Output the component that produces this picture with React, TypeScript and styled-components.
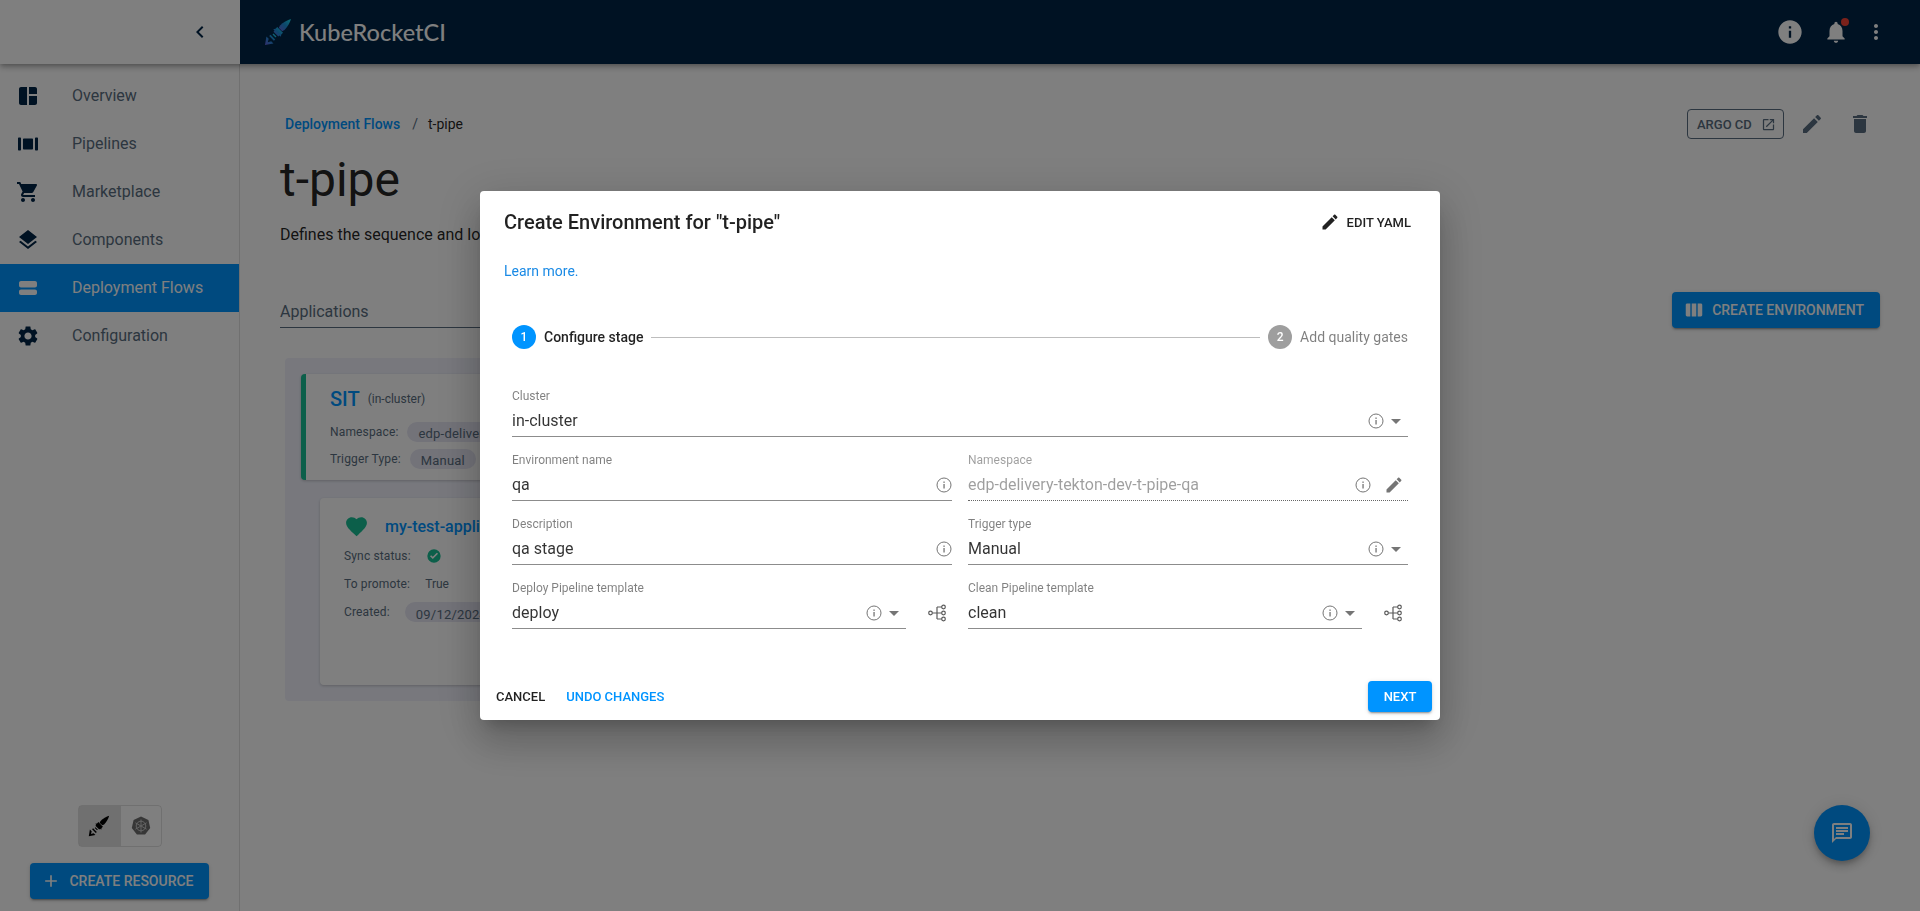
import React from "react";
import styled, { createGlobalStyle } from "styled-components";

const PATHS = {
  dashboard:
    "M11 21H5c-1.1 0-2-.9-2-2V5c0-1.1.9-2 2-2h6v18zm2 0h6c1.1 0 2-.9 2-2v-7h-8v9zm8-11V5c0-1.1-.9-2-2-2h-6v7h8z",
  pipelines:
    "M2 6.5c0-.6.4-1 1-1h1c.6 0 1 .4 1 1v11c0 .6-.4 1-1 1H3c-.6 0-1-.4-1-1v-11zm17 0c0-.6.4-1 1-1h1c.6 0 1 .4 1 1v11c0 .6-.4 1-1 1h-1c-.6 0-1-.4-1-1v-11zM7 7.5c0-.6.4-1 1-1h8c.6 0 1 .4 1 1v9c0 .6-.4 1-1 1H8c-.6 0-1-.4-1-1v-9z",
  cart: "M7 18c-1.1 0-1.99.9-1.99 2S5.9 22 7 22s2-.9 2-2-.9-2-2-2zM1 2v2h2l3.6 7.59-1.35 2.45c-.16.28-.25.61-.25.96 0 1.1.9 2 2 2h12v-2H7.42c-.14 0-.25-.11-.25-.25l.03-.12.9-1.63h7.45c.75 0 1.41-.41 1.75-1.03l3.58-6.49c.08-.14.12-.31.12-.48 0-.55-.45-1-1-1H5.21l-.94-2H1zm16 16c-1.1 0-1.99.9-1.99 2s.89 2 1.99 2 2-.9 2-2-.9-2-2-2z",
  layers:
    "M11.99 18.54l-7.37-5.73L3 14.07l9 7 9-7-1.63-1.27-7.38 5.74zM12 16l7.36-5.73L21 9l-9-7-9 7 1.63 1.27L12 16z",
  flows:
    "M5 5h14c1.1 0 2 .9 2 2v2.5c0 1.1-.9 2-2 2H5c-1.1 0-2-.9-2-2V7c0-1.100.9-2 2-2zm0 8.500h14c1.100 0 2 .9 2 2V17c0 1.100-.9 2-2 2H5c-1.100 0-2-.9-2-2v-1.500c0-1.100.9-2 2-2z",
  settings:
    "M19.14 12.94c.04-.3.06-.61.06-.94 0-.32-.02-.64-.07-.94l2.03-1.58c.18-.14.23-.41.12-.61l-1.92-3.32c-.12-.22-.37-.29-.59-.22l-2.39.96c-.5-.38-1.03-.7-1.62-.94l-.36-2.54c-.04-.24-.24-.41-.48-.41h-3.84c-.24 0-.43.17-.47.41l-.36 2.54c-.59.24-1.13.57-1.62.94l-2.39-.96c-.22-.08-.47 0-.59.22L2.74 8.87c-.12.21-.08.47.12.61l2.03 1.58c-.05.3-.09.63-.09.94s.02.64.07.94l-2.03 1.58c-.18.14-.23.41-.12.61l1.92 3.32c.12.22.37.29.59.22l2.39-.96c.5.38 1.03.7 1.62.94l.36 2.54c.05.24.24.41.48.41h3.84c.24 0 .44-.17.47-.41l.36-2.54c.59-.24 1.13-.56 1.62-.94l2.39.96c.22.08.47 0 .59-.22l1.92-3.32c.12-.22.07-.47-.12-.61l-2.01-1.58zM12 15.6c-1.98 0-3.6-1.62-3.6-3.6s1.62-3.6 3.6-3.6 3.6 1.62 3.6 3.6-1.62 3.6-3.6 3.6z",
  pencil:
    "M3 17.25V21h3.750L17.810 9.940l-3.750-3.750L3 17.250zM20.710 7.040c.390-.390.390-1.020 0-1.410l-2.340-2.340c-.390-.390-1.020-.390-1.410 0l-1.830 1.830 3.750 3.750 1.830-1.830z",
  trash:
    "M6 19c0 1.100.9 2 2 2h8c1.100 0 2-.9 2-2V7H6v12zM19 4h-3.500l-1-1h-5l-1 1H5v2h14V4z",
  external:
    "M19 19H5V5h7V3H5c-1.110 0-2 .9-2 2v14c0 1.100.89 2 2 2h14c1.100 0 2-.9 2-2v-7h-2v7zM14 3v2h3.590l-9.830 9.830 1.410 1.410L19 6.410V10h2V3h-7z",
  info: "M12 2C6.480 2 2 6.480 2 12s4.480 10 10 10 10-4.480 10-10S17.520 2 12 2zm1 15h-2v-6h2v6zm0-8h-2V7h2v2z",
  bell: "M12 22c1.100 0 2-.9 2-2h-4c0 1.100.89 2 2 2zm6-6v-5c0-3.070-1.640-5.640-4.500-6.320V4c0-.83-.67-1.500-1.500-1.500s-1.500.67-1.500 1.500v.68C7.630 5.360 6 7.920 6 11v5l-2 2v1h16v-1l-2-2z",
  more: "M12 8c1.100 0 2-.9 2-2s-.9-2-2-2-2 .9-2 2 .9 2 2 2zm0 2c-1.100 0-2 .9-2 2s.9 2 2 2 2-.9 2-2-.9-2-2-2zm0 6c-1.100 0-2 .9-2 2s.9 2 2 2 2-.9 2-2-.9-2-2-2z",
  chevron: "M15.410 7.410L14 6l-6 6 6 6 1.410-1.410L10.830 12z",
  columns:
    "M3 6.500C3 5.700 3.700 5 4.500 5H8v14H4.500C3.700 19 3 18.300 3 17.500v-11zM9.500 5h5v14h-5V5zM16 5h3.500c.8 0 1.500.7 1.500 1.500v11c0 .8-.7 1.500-1.500 1.500H16V5z",
  heart:
    "M12 21.350l-1.450-1.320C5.400 15.360 2 12.280 2 8.500 2 5.420 4.420 3 7.500 3c1.740 0 3.410.81 4.500 2.090C13.090 3.810 14.760 3 16.500 3 19.580 3 22 5.420 22 8.500c0 3.780-3.400 6.860-8.550 11.540L12 21.350z",
  plus: "M19 13h-6v6h-2v-6H5v-2h6V5h2v6h6v2z",
  message:
    "M20 2H4c-1.100 0-1.990.9-1.990 2L2 22l4-4h14c1.100 0 2-.9 2-2V4c0-1.100-.9-2-2-2zm0 14H6l-2 2V4h16v12zM6 6h12v2H6zm0 3h12v2H6zm0 3h8v2H6z",
  arrow: "M7 10l5 5 5-5z",
  check: "M12 2a10 10 0 100 20 10 10 0 000-20zm-1.800 14.600L6 12.400l1.700-1.700 2.500 2.500 6.100-6.100 1.700 1.700-7.800 7.800z",
};

type IconName = keyof typeof PATHS;

const Icon = ({ name, size = 24, color = "currentColor" }: { name: IconName; size?: number; color?: string }) => (
  <svg width={size} height={size} viewBox="0 0 24 24" fill={color} style={{ flexShrink: 0, display: "block" }}>
    <path d={PATHS[name]} />
  </svg>
);

const InfoOutline = () => (
  <svg width="16" height="16" viewBox="0 0 16 16" fill="none" style={{ flexShrink: 0 }}>
    <circle cx="8" cy="8" r="7" stroke="#757575" strokeWidth="1" />
    <rect x="7.400" y="7" width="1.300" height="4.500" fill="#757575" />
    <rect x="7.400" y="4.500" width="1.300" height="1.400" fill="#757575" />
  </svg>
);

const TreeIcon = () => (
  <svg width="18" height="18" viewBox="0 0 18 18" fill="none" stroke="#5a5a5a" strokeWidth="1.200">
    <circle cx="2.500" cy="9" r="1.800" />
    <circle cx="15.500" cy="3" r="1.800" />
    <circle cx="15.500" cy="9" r="1.800" />
    <circle cx="15.500" cy="15" r="1.800" />
    <path d="M4.300 9h9.400M9 3v12M9 3h4.700M9 15h4.700" />
  </svg>
);

const RocketLogo = ({ mono, size = 28 }: { mono?: boolean; size?: number }) => (
  <svg width={size} height={size} viewBox="0 0 28 28" style={{ flexShrink: 0 }}>
    <defs>
      <linearGradient id={mono ? "rocketMono" : "rocketColor"} x1="0" y1="1" x2="1" y2="0">
        <stop offset="0" stopColor={mono ? "#000" : "#6a60e0"} />
        <stop offset="0.5" stopColor={mono ? "#000" : "#1a8fd8"} />
        <stop offset="1" stopColor={mono ? "#000" : "#1ce0f0"} />
      </linearGradient>
    </defs>
    <g fill={`url(#${mono ? "rocketMono" : "rocketColor"})`}>
      <path d="M27 1c-1 3.500-3.500 8-6.500 11l-2.300 1.200-3.400-3.400L16 7.500C19 4.500 23.500 2 27 1z" />
      <path d="M13.200 9l5.800 5.800-1.700 1.700-.5 2.300-1.300-1.300-1.200 1-4.800-4.800 1-1.200-1.300-1.300 2.300-.5z" />
      <path d="M9.500 15.500l3 3-1 1-3-3zM1 27l1.400-8.500 2.300 2.300-.9 3.400 3.400-.9 2.300 2.300z" />
      <path d="M6.500 16.800l4.700 4.700-1.300 1.300-4.700-4.700z" />
    </g>
  </svg>
);

const K8sLogo = () => (
  <svg width="20" height="20" viewBox="0 0 20 20">
    <path d="M10 .5l7.400 3.600 1.800 8-5.100 6.400H5.900L.8 12.100l1.800-8z" fill="#6f6f6f" />
    <g stroke="#c8c8c8" strokeWidth="1" fill="none">
      <circle cx="10" cy="10" r="4.800" />
      <path d="M10 3.500v13M4.400 6.800l11.200 6.400M15.600 6.800L4.400 13.200" />
    </g>
  </svg>
);

const NAV: { label: string; icon: IconName; active?: boolean }[] = [
  { label: "Overview", icon: "dashboard" },
  { label: "Pipelines", icon: "pipelines" },
  { label: "Marketplace", icon: "cart" },
  { label: "Components", icon: "layers" },
  { label: "Deployment Flows", icon: "flows", active: true },
  { label: "Configuration", icon: "settings" },
];

const Field = ({
  label,
  value,
  select,
  disabled,
  edit,
}: {
  label: string;
  value: string;
  select?: boolean;
  disabled?: boolean;
  edit?: boolean;
}) => (
  <FieldBox>
    <FieldLabel $disabled={disabled}>{label}</FieldLabel>
    <FieldInput $disabled={disabled}>
      <FieldValue $disabled={disabled}>{value}</FieldValue>
      <InfoOutline />
      {select && <Icon name="arrow" color="#757575" />}
      {edit && (
        <EditSlot>
          <Icon name="pencil" size={20} color="#757575" />
        </EditSlot>
      )}
    </FieldInput>
  </FieldBox>
);

export default function App() {
  return (
    <>
      <GlobalStyle />
      <Page>
        <TopRow>
          <SideHead>
            <Icon name="chevron" color="#002446" />
          </SideHead>
          <AppBar>
            <Brand>
              <RocketLogo />
              <BrandName>KubeRocketCI</BrandName>
            </Brand>
            <AppBarActions>
              <InfoSlot>
                <Icon name="info" size={28} color="#fff" />
              </InfoSlot>
              <BellWrap>
                <Icon name="bell" size={26} color="#fff" />
                <BellDot />
              </BellWrap>
              <Icon name="more" size={24} color="#fff" />
            </AppBarActions>
          </AppBar>
        </TopRow>
        <Body>
          <Sidebar>
            <Nav>
              {NAV.map((n) => (
                <NavItem key={n.label} $active={n.active}>
                  <NavIcon>
                    <Icon name={n.icon} color={n.active ? "#fff" : "#002446"} />
                  </NavIcon>
                  <NavLabel>{n.label}</NavLabel>
                </NavItem>
              ))}
            </Nav>
            <SideBottom>
              <ModeToggle>
                <ModeButton $active>
                  <RocketLogo mono size={22} />
                </ModeButton>
                <ModeButton>
                  <K8sLogo />
                </ModeButton>
              </ModeToggle>
              <ResourceButton>
                <Icon name="plus" size={20} />
                Create resource
              </ResourceButton>
            </SideBottom>
          </Sidebar>
          <Main>
            <TopLine>
              <Crumbs>
                <CrumbLink>Deployment Flows</CrumbLink>
                <CrumbSep>/</CrumbSep>
                <span>t-pipe</span>
              </Crumbs>
              <TopActions>
                <OutlineButton>
                  Argo CD
                  <Icon name="external" size={15} />
                </OutlineButton>
                <ActionIcon>
                  <Icon name="pencil" />
                </ActionIcon>
                <ActionIcon>
                  <Icon name="trash" />
                </ActionIcon>
              </TopActions>
            </TopLine>
            <Title>t-pipe</Title>
            <Description>Defines the sequence and logic for promoting artifacts through environments.</Description>
            <TabsRow>
              <Tabs>Applications</Tabs>
              <PrimaryButton>
                <Icon name="columns" size={22} />
                Create environment
              </PrimaryButton>
            </TabsRow>
            <StagePanel>
              <StageCard>
                <StageTitle>
                  <StageName>SIT</StageName>
                  <StageCluster>(in-cluster)</StageCluster>
                </StageTitle>
                <MetaRow>
                  <MetaLabel>Namespace:</MetaLabel>
                  <Chip>edp-delivery-tekton-dev-t-pipe-sit</Chip>
                </MetaRow>
                <MetaRow>
                  <MetaLabel>Trigger Type:</MetaLabel>
                  <Chip>Manual</Chip>
                </MetaRow>
              </StageCard>
              <AppCard>
                <AppTitle>
                  <Icon name="heart" size={25} color="#18be94" />
                  <AppName>my-test-application</AppName>
                </AppTitle>
                <AppMeta>
                  <MetaLabel>Sync status:</MetaLabel>
                  <Icon name="check" size={16} color="#18be94" />
                </AppMeta>
                <AppMeta>
                  <MetaLabel>To promote:</MetaLabel>
                  <PromoteValue>True</PromoteValue>
                </AppMeta>
                <AppMeta>
                  <MetaLabel>Created:</MetaLabel>
                  <Chip>09/12/2024, 11:24:07</Chip>
                </AppMeta>
              </AppCard>
            </StagePanel>
          </Main>
        </Body>
        <Fab>
          <Icon name="message" color="#fff" />
        </Fab>
      </Page>
      <Backdrop>
        <Dialog>
          <DialogHead>
            <DialogTitle>Create Environment for "t-pipe"</DialogTitle>
            <EditYaml>
              <Icon name="pencil" size={20} color="rgba(0,0,0,0.87)" />
              Edit YAML
            </EditYaml>
          </DialogHead>
          <LearnMore>Learn more.</LearnMore>
          <Stepper>
            <StepCircle $active>1</StepCircle>
            <StepLabel $active>Configure stage</StepLabel>
            <StepLine />
            <StepCircle>2</StepCircle>
            <StepLabel>Add quality gates</StepLabel>
          </Stepper>
          <Form>
            <Wide>
              <Field label="Cluster" value="in-cluster" select />
            </Wide>
            <Field label="Environment name" value="qa" />
            <Field label="Namespace" value="edp-delivery-tekton-dev-t-pipe-qa" disabled edit />
            <Field label="Description" value="qa stage" />
            <Field label="Trigger type" value="Manual" select />
            <WithTree>
              <Field label="Deploy Pipeline template" value="deploy" select />
              <TreeSlot>
                <TreeIcon />
              </TreeSlot>
            </WithTree>
            <WithTree>
              <Field label="Clean Pipeline template" value="clean" select />
              <TreeSlot>
                <TreeIcon />
              </TreeSlot>
            </WithTree>
          </Form>
          <DialogFoot>
            <FootLeft>
              <TextButton>Cancel</TextButton>
              <TextButton $primary>Undo changes</TextButton>
            </FootLeft>
            <NextButton>Next</NextButton>
          </DialogFoot>
        </Dialog>
      </Backdrop>
    </>
  );
}

const GlobalStyle = createGlobalStyle`
  html, body {
    margin: 0;
    height: 100%;
    overflow: hidden;
    background: #fff;
    font-family: Roboto, "Liberation Sans", sans-serif;
  }
  * { box-sizing: border-box; }
`;

const Page = styled.div`
  display: flex;
  flex-direction: column;
  height: 911px;
  background: #fff;
`;

const TopRow = styled.div`
  display: flex;
  height: 64px;
  position: relative;
  z-index: 2;
  box-shadow: 0 2px 4px -1px rgba(0, 0, 0, 0.2), 0 4px 5px rgba(0, 0, 0, 0.14), 0 1px 10px rgba(0, 0, 0, 0.12);
`;

const SideHead = styled.div`
  width: 240px;
  display: flex;
  align-items: center;
  justify-content: flex-end;
  padding-right: 28px;
  background: #fff;
`;

const AppBar = styled.header`
  flex: 1;
  display: flex;
  align-items: center;
  justify-content: space-between;
  background: #002446;
  padding: 0 32px 0 24px;
`;

const Brand = styled.div`
  display: flex;
  align-items: center;
  gap: 7px;
`;

const BrandName = styled.span`
  font-family: Lato, sans-serif;
  font-size: 23.5px;
  font-weight: 500;
  color: #fff;
`;

const AppBarActions = styled.div`
  display: flex;
  align-items: center;
  gap: 15px;
`;

const InfoSlot = styled.span`
  margin-right: 4px;
`;

const BellWrap = styled.div`
  position: relative;
`;

const BellDot = styled.span`
  position: absolute;
  top: -1px;
  right: 0;
  width: 8px;
  height: 8px;
  border-radius: 50%;
  background: #f44336;
`;

const Body = styled.div`
  flex: 1;
  display: flex;
  min-height: 0;
`;

const Sidebar = styled.aside`
  width: 240px;
  flex-shrink: 0;
  display: flex;
  flex-direction: column;
  justify-content: space-between;
  border-right: 1px solid rgba(0, 0, 0, 0.12);
  padding: 8px 0 12px;
`;

const Nav = styled.nav`
  display: flex;
  flex-direction: column;
`;

const NavItem = styled.div<{ $active?: boolean }>`
  display: flex;
  align-items: center;
  height: 48px;
  font-size: 16px;
  color: ${({ $active }) => ($active ? "#fff" : "#596d80")};
  background: ${({ $active }) => ($active ? "#0094ff" : "transparent")};
`;

const NavIcon = styled.span`
  width: 72px;
  padding-left: 16px;
`;

const NavLabel = styled.span`
  padding-bottom: 2px;
`;

const SideBottom = styled.div`
  display: flex;
  flex-direction: column;
  align-items: center;
  gap: 16px;
`;

const ModeToggle = styled.div`
  display: flex;
  border: 1px solid rgba(0, 0, 0, 0.12);
  border-radius: 4px;
  overflow: hidden;
`;

const ModeButton = styled.div<{ $active?: boolean }>`
  width: 41px;
  height: 40px;
  display: flex;
  align-items: center;
  justify-content: center;
  background: ${({ $active }) => ($active ? "rgba(0,0,0,0.12)" : "transparent")};
  & + & {
    border-left: 1px solid rgba(0, 0, 0, 0.12);
  }
`;

const PrimaryButton = styled.button`
  display: inline-flex;
  align-items: center;
  gap: 7px;
  height: 36px;
  padding: 0 16px 0 11px;
  border: 0;
  border-radius: 4px;
  background: #0094ff;
  color: #fff;
  font-family: inherit;
  font-size: 14px;
  font-weight: 500;
  text-transform: uppercase;
  white-space: nowrap;
  box-shadow: 0 3px 1px -2px rgba(0, 0, 0, 0.2), 0 2px 2px rgba(0, 0, 0, 0.14), 0 1px 5px rgba(0, 0, 0, 0.12);
`;

const ResourceButton = styled(PrimaryButton)`
  gap: 8px;
  padding: 0 15px 0 11px;
`;

const Main = styled.main`
  flex: 1;
  min-width: 0;
  padding: 45px 40px 0;
`;

const TopLine = styled.div`
  display: flex;
  align-items: center;
  justify-content: space-between;
  height: 30px;
`;

const Crumbs = styled.div`
  display: flex;
  align-items: center;
  padding-left: 5px;
  font-size: 14px;
  color: rgba(0, 0, 0, 0.87);
`;

const CrumbLink = styled.span`
  color: #0094ff;
  font-weight: 500;
`;

const CrumbSep = styled.span`
  margin: 0 10px 0 12px;
  color: #596d80;
`;

const TopActions = styled.div`
  display: flex;
  align-items: center;
  gap: 8px;
`;

const OutlineButton = styled.button`
  display: inline-flex;
  align-items: center;
  gap: 9px;
  height: 30px;
  width: 97px;
  padding: 0 9px;
  background: transparent;
  border: 1px solid #596d80;
  border-radius: 4px;
  color: #596d80;
  font-family: inherit;
  font-size: 13px;
  font-weight: 500;
  text-transform: uppercase;
  white-space: nowrap;
`;

const ActionIcon = styled.span`
  width: 40px;
  display: flex;
  justify-content: center;
  color: #596d80;
`;

const Title = styled.h1`
  margin: 13px 0 0;
  font-size: 48px;
  line-height: 56px;
  font-weight: 400;
  color: rgba(0, 0, 0, 0.87);
`;

const Description = styled.p`
  margin: 15px 0 0;
  font-size: 16px;
  line-height: 24px;
  color: rgba(0, 0, 0, 0.87);
`;

const TabsRow = styled.div`
  display: flex;
  align-items: flex-end;
  justify-content: space-between;
  margin-top: 45px;
  height: 36px;
`;

const Tabs = styled.div`
  width: 1000px;
  height: 36px;
  padding-top: 10px;
  border-bottom: 1px solid #596d80;
  font-size: 16px;
  color: #596d80;
`;

const StagePanel = styled.section`
  width: 1000px;
  height: 343px;
  margin: 30px 0 0 5px;
  padding: 16px;
  border-radius: 4px;
  background: #f0f1fb;
`;

const StageCard = styled.div`
  height: 106px;
  padding: 10px 24px;
  border-left: 5px solid #18be94;
  border-radius: 4px;
  background: #fff;
  box-shadow: 0 1px 3px rgba(0, 0, 0, 0.2);
`;

const StageTitle = styled.div`
  display: flex;
  align-items: center;
  gap: 8px;
  height: 30px;
  margin-bottom: 4px;
`;

const StageName = styled.span`
  font-size: 20px;
  font-weight: 500;
  color: #0094ff;
`;

const StageCluster = styled.span`
  font-size: 12px;
  color: #596d80;
`;

const MetaRow = styled.div`
  display: flex;
  align-items: center;
  gap: 9px;
  height: 27px;
`;

const MetaLabel = styled.span`
  font-size: 12px;
  letter-spacing: 0.15px;
  color: #596d80;
  white-space: nowrap;
`;

const Chip = styled.span`
  display: inline-flex;
  align-items: center;
  height: 20px;
  padding: 4px 11px 0;
  border-radius: 10px;
  background: #e6e6f3;
  font-size: 13px;
  letter-spacing: 0.2px;
  color: #596d80;
  white-space: nowrap;
`;

const AppCard = styled.div`
  height: 187px;
  margin: 18px 0 0 19px;
  padding: 15px 24px;
  border-radius: 4px;
  background: #fff;
  box-shadow: 0 1px 3px rgba(0, 0, 0, 0.2);
`;

const AppTitle = styled.div`
  display: flex;
  align-items: center;
  gap: 16px;
  height: 26px;
  margin-bottom: 3px;
`;

const AppName = styled.span`
  font-size: 16px;
  font-weight: 500;
  color: #0094ff;
`;

const AppMeta = styled.div`
  display: flex;
  align-items: center;
  gap: 15px;
  height: 28px;
`;

const PromoteValue = styled.span`
  font-size: 12px;
  color: #596d80;
`;

const Fab = styled.button`
  position: fixed;
  left: 1814px;
  top: 805px;
  width: 56px;
  height: 56px;
  display: flex;
  align-items: center;
  justify-content: center;
  border: 0;
  border-radius: 50%;
  background: #0094ff;
  box-shadow: 0 3px 5px -1px rgba(0, 0, 0, 0.2), 0 6px 10px rgba(0, 0, 0, 0.14), 0 1px 18px rgba(0, 0, 0, 0.12);
`;

const Backdrop = styled.div`
  position: fixed;
  inset: 0;
  z-index: 10;
  display: flex;
  align-items: center;
  justify-content: center;
  background: rgba(0, 0, 0, 0.5);
`;

const Dialog = styled.div`
  width: 960px;
  height: 529px;
  display: flex;
  flex-direction: column;
  border-radius: 4px;
  background: #fff;
  box-shadow: 0 11px 15px -7px rgba(0, 0, 0, 0.2), 0 24px 38px 3px rgba(0, 0, 0, 0.14), 0 9px 46px 8px rgba(0, 0, 0, 0.12);
`;

const DialogHead = styled.div`
  display: flex;
  align-items: center;
  justify-content: space-between;
  height: 62px;
  padding: 0 29px 0 24px;
`;

const DialogTitle = styled.h2`
  margin: 0;
  font-size: 20px;
  font-weight: 500;
  color: rgba(0, 0, 0, 0.87);
`;

const EditYaml = styled.span`
  display: inline-flex;
  align-items: center;
  gap: 7px;
  font-size: 13px;
  font-weight: 500;
  text-transform: uppercase;
  color: rgba(0, 0, 0, 0.87);
`;

const LearnMore = styled.a`
  margin: 8px 0 0 24px;
  font-size: 14px;
  line-height: 20px;
  color: #1a8ae5;
`;

const Stepper = styled.div`
  display: flex;
  align-items: center;
  margin: 44px 32px 0;
  height: 24px;
`;

const StepCircle = styled.span<{ $active?: boolean }>`
  width: 24px;
  height: 24px;
  display: flex;
  align-items: center;
  justify-content: center;
  border-radius: 50%;
  background: ${({ $active }) => ($active ? "#0094ff" : "#9e9e9e")};
  color: #fff;
  font-size: 12px;
  font-weight: 500;
`;

const StepLabel = styled.span<{ $active?: boolean }>`
  margin-left: 8px;
  font-size: 14px;
  font-weight: ${({ $active }) => ($active ? 500 : 400)};
  color: ${({ $active }) => ($active ? "rgba(0,0,0,0.87)" : "rgba(0,0,0,0.5)")};
`;

const StepLine = styled.span`
  flex: 1;
  height: 1px;
  margin: 0 8px;
  background: #bdbdbd;
`;

const Form = styled.div`
  display: grid;
  grid-template-columns: 1fr 1fr;
  column-gap: 16px;
  row-gap: 14px;
  margin: 38px 32px 0;
`;

const Wide = styled.div`
  grid-column: 1 / -1;
`;

const WithTree = styled.div`
  display: flex;
`;

const TreeSlot = styled.div`
  width: 46px;
  display: flex;
  align-items: flex-end;
  justify-content: center;
  padding-bottom: 7px;
  padding-left: 16px;
`;

const FieldBox = styled.div`
  flex: 1;
  min-width: 0;
  height: 50px;
`;

const FieldLabel = styled.div<{ $disabled?: boolean }>`
  height: 17px;
  font-size: 12px;
  line-height: 18px;
  color: ${({ $disabled }) => ($disabled ? "rgba(0,0,0,0.38)" : "rgba(0,0,0,0.5)")};
`;

const FieldInput = styled.div<{ $disabled?: boolean }>`
  display: flex;
  align-items: center;
  height: 33px;
  padding-top: 1px;
  border-bottom: 1px ${({ $disabled }) => ($disabled ? "dotted rgba(0,0,0,0.6)" : "solid #8c8c8c")};
`;

const FieldValue = styled.span<{ $disabled?: boolean }>`
  flex: 1;
  font-size: 16px;
  color: ${({ $disabled }) => ($disabled ? "rgba(0,0,0,0.38)" : "rgba(0,0,0,0.8)")};
`;

const EditSlot = styled.span`
  margin: 0 4px 0 13px;
`;

const DialogFoot = styled.div`
  margin-top: auto;
  display: flex;
  align-items: center;
  justify-content: space-between;
  padding: 0 8px 8px;
`;

const FootLeft = styled.div`
  display: flex;
  gap: 5px;
`;

const TextButton = styled.button<{ $primary?: boolean }>`
  height: 31px;
  padding: 0 8px;
  border: 0;
  background: transparent;
  font-family: inherit;
  font-size: 13px;
  font-weight: 500;
  text-transform: uppercase;
  color: ${({ $primary }) => ($primary ? "#0094ff" : "rgba(0,0,0,0.87)")};
`;

const NextButton = styled.button`
  width: 64px;
  height: 31px;
  border: 0;
  border-radius: 4px;
  background: #0094ff;
  color: #fff;
  font-family: inherit;
  font-size: 13px;
  font-weight: 500;
  text-transform: uppercase;
  box-shadow: 0 3px 1px -2px rgba(0, 0, 0, 0.2), 0 2px 2px rgba(0, 0, 0, 0.14), 0 1px 5px rgba(0, 0, 0, 0.12);
`;
